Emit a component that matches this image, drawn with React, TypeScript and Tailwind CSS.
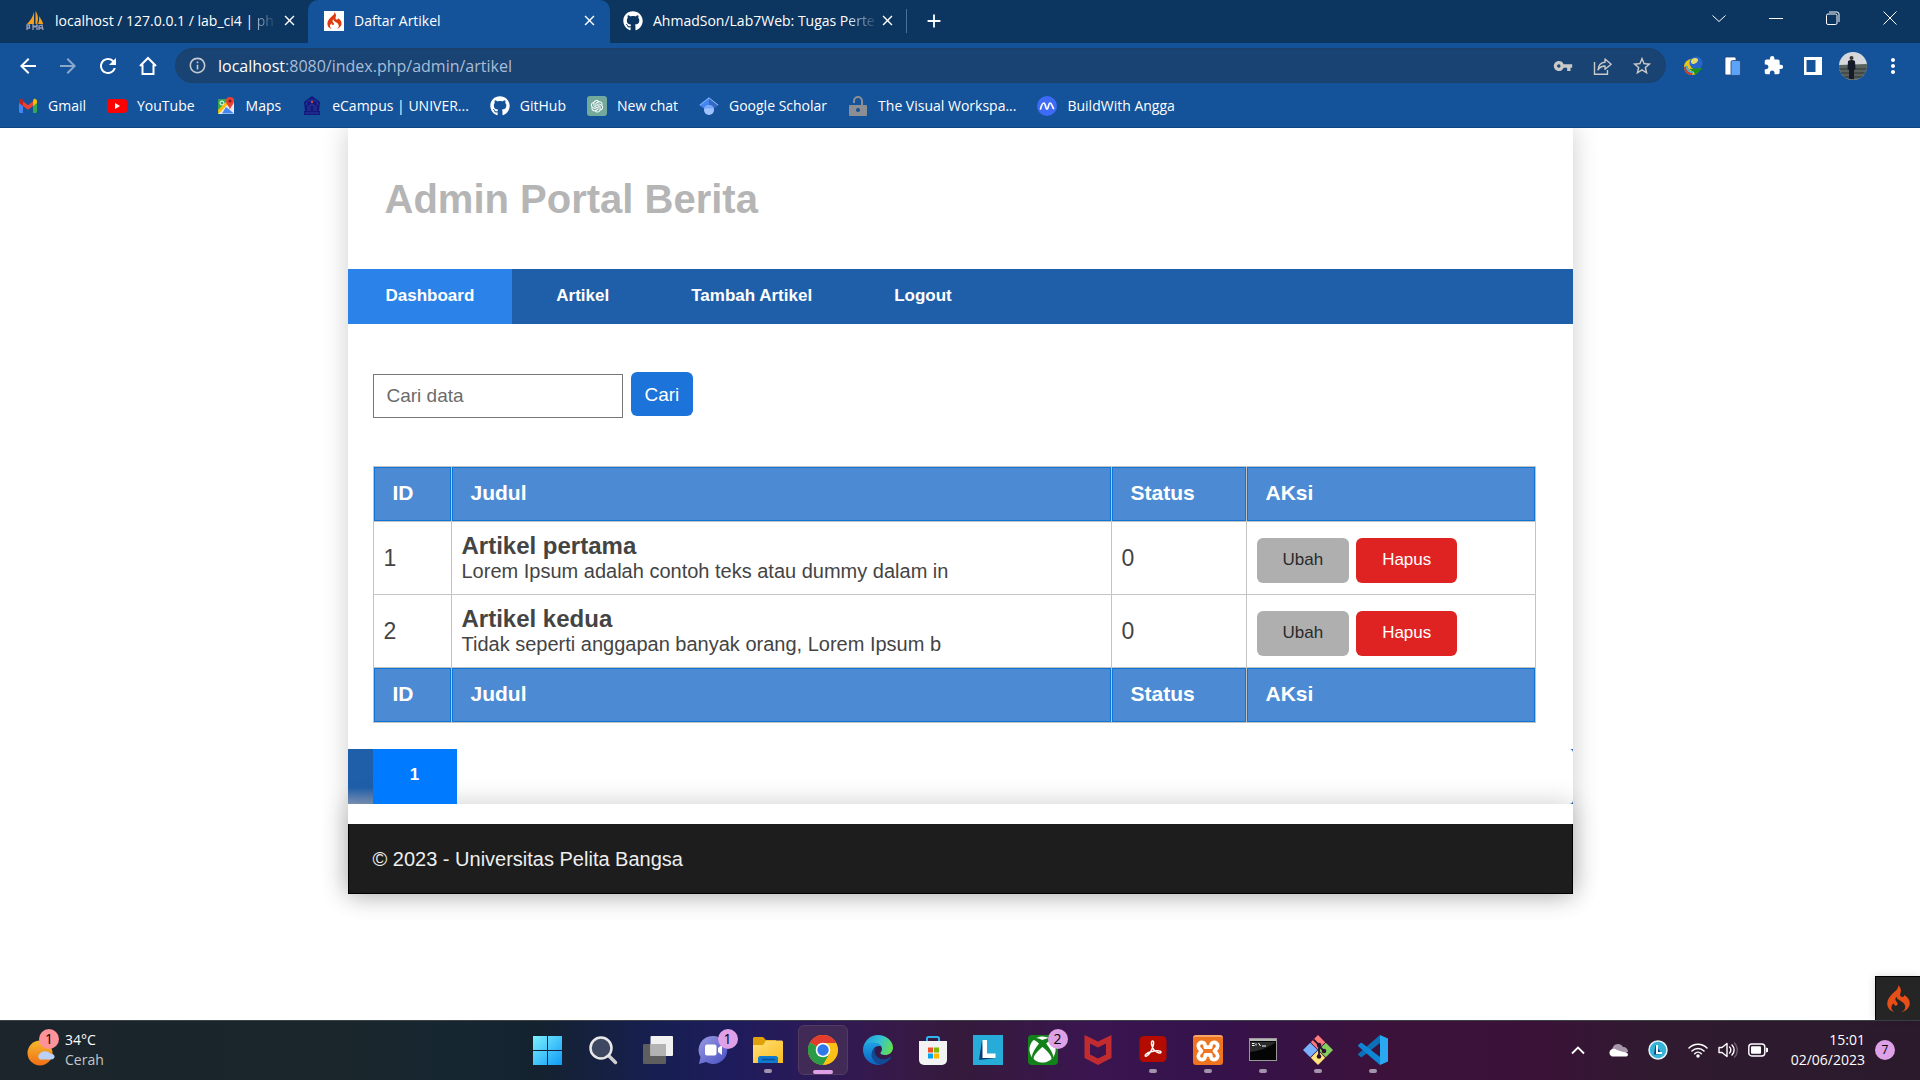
import React from "react";
import { FaGithub, FaXbox } from "react-icons/fa";
import { AiOutlineOpenAI } from "react-icons/ai";
import { SiCodeigniter } from "react-icons/si";
import { MdVpnKey, MdExtension, MdStarBorder, MdInfoOutline, MdMoreVert, MdClose, MdAdd, MdArrowBack, MdArrowForward, MdRefresh } from "react-icons/md";

const PmaIcon = () => (
  <svg viewBox="0 0 20 20" className="size-5 shrink-0">
    <path d="M9 1v12H2C5 10 8 6 9 1zM10.500 0c3 4 3 9 1.500 13h-1.500zM14 5c2 3 4 6 4 8h-5c1-2 1.500-5 1-8z" fill="#f6a01a" />
    <path d="M2 19v-5h2.500v3H2M8 19v-5l2 2 2-2v5M14 19v-4l3-1 1 5M14 17h4" fill="none" stroke="#9aa0b8" strokeWidth="1.300" />
  </svg>
);

const HomeIcon = () => (
  <svg viewBox="0 0 24 24" className="size-6">
    <path d="M4 12L12 4l8 8M6.500 10.500V20h11v-9.500" fill="none" stroke="#fff" strokeWidth="2" />
  </svg>
);

const ShareIcon = () => (
  <svg viewBox="0 0 20 20" className="size-5">
    <path d="M1.500 6v12.300h13V14" fill="none" stroke="#c9c9c9" strokeWidth="1.400" />
    <path d="M5 14c.3-5 3-7.500 7-7.800V3l6.200 5.200-6.200 5V10c-3 0-5.500 1.500-7 4z" fill="none" stroke="#c9c9c9" strokeWidth="1.400" strokeLinejoin="round" />
  </svg>
);

const GmailIcon = () => (
  <svg viewBox="0 0 20 20" className="size-5 shrink-0">
    <path d="M1 5v10.500c0 .8.600 1.500 1.400 1.500H5V8z" fill="#4285f4" />
    <path d="M19 5v10.500c0 .8-.6 1.500-1.400 1.500H15V8z" fill="#34a853" />
    <path d="M15 5.500V10l4-3V5.200c0-2-2.200-3-3.500-2z" fill="#fbbc04" />
    <path d="M5 10V5.300l5 3.900 5-3.900V10l-5 3.800z" fill="#ea4335" />
    <path d="M1 5.200V7l4 3V5.300L4.500 3.200C3.200 2.200 1 3.200 1 5.200z" fill="#c5221f" />
  </svg>
);

const YoutubeIcon = () => (
  <svg viewBox="0 0 20 20" className="size-5 shrink-0">
    <rect y="3" width="20" height="14" rx="3" fill="#f00" />
    <path d="M8 7v6l5-3z" fill="#fff" />
  </svg>
);

const MapsIcon = () => (
  <svg viewBox="0 0 20 20" className="size-5 shrink-0">
    <rect x="2" y="3" width="16" height="15" rx="1" fill="#34a853" />
    <path d="M2 17.500L15 4l3 2v12H3z" fill="#e8eaed" />
    <path d="M10 11l8 6.500H6z" fill="#4285f4" />
    <path d="M2 14l8-8 2 2-9.500 10z" fill="#fbbc04" />
    <circle cx="6" cy="7" r="2" fill="none" stroke="#fff" />
    <path d="M14 14c-.5-4-4-5-4-9a4 4 0 018 0c0 4-3.500 5-4 9z" fill="#ea4335" />
    <circle cx="14" cy="5" r="1.600" fill="#8c1a12" />
  </svg>
);

const CampusIcon = () => (
  <svg viewBox="0 0 20 20" className="size-5 shrink-0">
    <path d="M10 0l8 6-1 9h1v4H2v-4h1L2 6z" fill="#14187c" />
    <path d="M4 9a6 5 0 0112 0M6 9v6M14 9v6M8 15V9h4v6M3 17h14" fill="none" stroke="#2c48a0" strokeWidth=".8" />
    <circle cx="10" cy="6" r="1.200" fill="#c9483f" />
  </svg>
);

const ChatGptIcon = () => (
  <span className="flex size-5 shrink-0 items-center justify-center rounded-[3px] bg-[#74aa9c]">
    <AiOutlineOpenAI className="size-4 text-white" />
  </span>
);

const ScholarIcon = () => (
  <svg viewBox="0 0 20 20" className="size-5 shrink-0">
    <path d="M10 1L0 9l10 7z" fill="#4285f4" />
    <path d="M10 1l10 8-10 7z" fill="#356ac3" />
    <path d="M1 9l9-7 9 7" fill="none" stroke="#8db5f5" />
    <circle cx="10" cy="14" r="5" fill="#a0c3ff" />
    <path d="M5.200 12.500a5 5 0 019.600 0z" fill="#76a7fa" />
  </svg>
);

const LockIcon = () => (
  <svg viewBox="0 0 20 20" className="size-5 shrink-0">
    <path d="M6 7V5a4 4 0 018 0v4" fill="none" stroke="#8b8f93" strokeWidth="2" />
    <rect x="1" y="9" width="18" height="11" rx="1" fill="#8b8f93" />
    <circle cx="10" cy="14" r="2" fill="#165196" />
  </svg>
);

const AnggaIcon = () => (
  <svg viewBox="0 0 20 20" className="size-5 shrink-0">
    <circle cx="10" cy="10" r="10" fill="#3d6bf5" />
    <path d="M3.500 13c1-4 2-6 3.500-6s1.500 6 3 6 1.500-6 3-6 2 3 3.500 5.500" fill="none" stroke="#fff" strokeWidth="1.700" strokeLinecap="round" />
  </svg>
);

const IdmIcon = () => (
  <svg viewBox="0 0 20 20" className="size-5">
    <circle cx="9" cy="11" r="8" fill="#e8c51b" />
    <path d="M1 11a8 8 0 008 8l1-3a5 5 0 01-5-6z" fill="#cf3325" />
    <path d="M4 10a5 5 0 006 6" fill="none" stroke="#46b3dc" strokeWidth="2" />
    <circle cx="13" cy="7" r="6.500" fill="#2a66c8" />
    <path d="M9 3c3-2 6-1 6 1s-3 4-5 4-3-3-1-5z" fill="#e3dc6a" />
    <path d="M6 13l14-1-8 7-1-3z" fill="#17921b" />
  </svg>
);

const DevicesIcon = () => (
  <svg viewBox="0 0 20 20" className="size-5">
    <rect x="2" y="1" width="11" height="18" rx="1.500" fill="#fff" stroke="#24467c" strokeWidth=".8" />
    <rect x="8" y="4.500" width="9.500" height="15" rx="1.500" fill="#5ba3fb" stroke="#24467c" strokeWidth=".8" />
  </svg>
);

const SidePanelIcon = () => (
  <svg viewBox="0 0 18 18" className="size-[18px]">
    <path d="M0 0h18v18H0zM2.500 3v12h9V3z" fill="#fff" fillRule="evenodd" />
  </svg>
);

const Avatar = () => (
  <svg viewBox="0 0 28 28" className="size-7">
    <defs><clipPath id="avatar"><circle cx="14" cy="14" r="14" /></clipPath></defs>
    <g clipPath="url(#avatar)">
      <rect width="28" height="28" fill="#d6d9dc" />
      <path d="M0 13l28-1v16H0z" fill="#59625f" />
      <path d="M0 17h28M0 21h28M0 25h28" stroke="#3e4644" strokeWidth="1.500" />
      <circle cx="12.500" cy="6" r="2" fill="#3b3431" />
      <path d="M9 9c2-1.500 5-1.500 7 0l.5 8-1.500 1v9h-5v-9l-1.500-1z" fill="#171b29" />
    </g>
  </svg>
);

const bookmarks = [
  { label: "Gmail", icon: <GmailIcon /> },
  { label: "YouTube", icon: <YoutubeIcon /> },
  { label: "Maps", icon: <MapsIcon /> },
  { label: "eCampus | UNIVER...", icon: <CampusIcon /> },
  { label: "GitHub", icon: <FaGithub className="size-5 shrink-0" /> },
  { label: "New chat", icon: <ChatGptIcon /> },
  { label: "Google Scholar", icon: <ScholarIcon /> },
  { label: "The Visual Workspa...", icon: <LockIcon /> },
  { label: "BuildWith Angga", icon: <AnggaIcon /> },
];

function WindowButton({ label, d }: { label: string; d: string }) {
  return (
    <button aria-label={label} className="flex h-9 w-[57px] items-center justify-center">
      <svg viewBox="0 0 14 14" className="size-3.5" fill="none" stroke="#fff">
        <path d={d} />
      </svg>
    </button>
  );
}

function TabStrip() {
  return (
    <div className="flex h-[43px] bg-[#0c355f]">
      <div className="flex w-[308px] items-center pr-2.5 pb-0.5 pl-[25px]">
        <PmaIcon />
        <span className="ml-2.5 flex-1 whitespace-nowrap">localhost / 127.0.0.1 / lab_ci4 | <span className="bg-linear-to-r from-[#9fb2c7] to-[#274b71] bg-clip-text text-transparent">ph</span></span>
        <button aria-label="Close tab"><MdClose className="size-[17px]" /></button>
      </div>
      <div className="flex w-[302px] items-center rounded-t-[10px] bg-[#14529a] pr-3 pb-0.5 pl-4">
        <span className="flex size-5 items-center justify-center bg-white">
          <SiCodeigniter className="size-[17px] text-[#dd3b0d]" />
        </span>
        <span className="ml-2.5 flex-1">Daftar Artikel</span>
        <button aria-label="Close tab"><MdClose className="size-[17px]" /></button>
      </div>
      <div className="flex w-[296px] items-center pr-2.5 pb-0.5 pl-[13px]">
        <FaGithub className="size-5 shrink-0" />
        <span className="ml-2.5 flex-1 whitespace-nowrap">AhmadSon/Lab7Web: Tugas P<span className="bg-linear-to-r from-white to-[#274b71] bg-clip-text text-transparent">erte</span></span>
        <button aria-label="Close tab"><MdClose className="size-[17px]" /></button>
      </div>
      <div className="flex items-center pb-0.5">
        <span className="h-6 w-px bg-[#48709b]" />
        <button aria-label="New tab" className="ml-4"><MdAdd className="size-[22px]" /></button>
      </div>
      <div className="ml-auto flex pr-0.5">
        <WindowButton label="Search tabs" d="M.5 4.500l6.500 6 6.500-6" />
        <WindowButton label="Minimize" d="M0 7.500h14" />
        <WindowButton label="Restore" d="M2 3h7.500a1.500 1.500 0 011.500 1.500V12a1.500 1.500 0 01-1.500 1.500H2A1.500 1.500 0 01.5 12V4.500A1.500 1.500 0 012 3zM3 1h8a2 2 0 012 2v8" />
        <WindowButton label="Close" d="M.5.5l13 13M13.500.5l-13 13" />
      </div>
    </div>
  );
}

function Browser() {
  return (
    <header className="relative z-20 bg-[#14529a] font-['Open_Sans',sans-serif] text-sm text-white">
      <TabStrip />
      <div className="flex h-[45px] items-center pr-[7px] pl-2">
        <button aria-label="Back" className="flex w-10 justify-center"><MdArrowBack className="size-6" /></button>
        <button aria-label="Forward" className="flex w-10 justify-center"><MdArrowForward className="size-6 text-[#8ba8ca]" /></button>
        <button aria-label="Reload" className="flex w-10 justify-center"><MdRefresh className="size-6" /></button>
        <button aria-label="Home" className="flex w-10 justify-center"><HomeIcon /></button>
        <div className="ml-[7px] flex h-[35px] flex-1 items-center rounded-full border border-[#1d406a] bg-[#194373] px-3 text-base">
          <MdInfoOutline className="size-[19px] text-[#c3cad2]" />
          <span className="ml-[11px] flex-1 text-[#a9bdd6]"><span className="text-white">localhost</span>:8080/index.php/admin/artikel</span>
          <button aria-label="Passwords" className="mr-5 text-[#c9c9c9]"><MdVpnKey className="size-5" /></button>
          <button aria-label="Share" className="mr-[18px]"><ShareIcon /></button>
          <button aria-label="Bookmark" className="text-[#c9c9c9]"><MdStarBorder className="size-[22px]" /></button>
        </div>
        <div className="ml-[7px] flex">
          {[
            ["Download manager", <IdmIcon />],
            ["Devices", <DevicesIcon />],
            ["Extensions", <MdExtension className="size-[21px]" />],
            ["Side panel", <SidePanelIcon />],
            ["Profile", <Avatar />],
            ["Menu", <MdMoreVert className="size-6" />],
          ].map(([label, icon]) => (
            <button key={label as string} aria-label={label as string} className="flex w-10 items-center justify-center">{icon}</button>
          ))}
        </div>
      </div>
      <nav className="flex h-10 items-center gap-[21px] border-b border-[#0f4684] pb-1 pl-[18px]">
        {bookmarks.map((b) => (
          <a key={b.label} href="#" className="flex items-center gap-2.5 whitespace-nowrap">
            {b.icon}
            {b.label}
          </a>
        ))}
      </nav>
    </header>
  );
}

const columns = ["ID", "Judul", "Status", "AKsi"];
const articles = [
  { id: 1, title: "Artikel pertama", text: "Lorem Ipsum adalah contoh teks atau dummy dalam in", status: 0 },
  { id: 2, title: "Artikel kedua", text: "Tidak seperti anggapan banyak orang, Lorem Ipsum b", status: 0 },
];

function HeadingRow() {
  return (
    <tr className="h-[55px]">
      {columns.map((c) => (
        <th key={c} scope="col" className="border border-[#c4c4c4] bg-[#4c8bd4] bg-clip-padding px-[19px] pb-0.5 text-left text-[21px] font-bold text-white shadow-[inset_0_0_0_1px_#0f74d4]">{c}</th>
      ))}
    </tr>
  );
}

function Portal() {
  return (
    <div className="mx-auto max-w-[1225px] bg-white shadow-[0_0_25px_rgba(0,0,0,0.2)]">
      <div className="flex h-[141px] items-center px-[37px]">
        <h1 className="text-[40px] leading-12 font-bold text-[#b5b5b5]">Admin Portal Berita</h1>
      </div>
      <nav className="flex h-[55px] gap-1.5 bg-[#1f5faa] text-[17px] font-bold text-white">
        {["Dashboard", "Artikel", "Tambah Artikel", "Logout"].map((item, i) => (
          <a key={item} href="#" className={i === 0 ? "flex items-center bg-[#2b83ea] px-[38px] pb-0.5" : "flex items-center px-[38px] pb-0.5"}>{item}</a>
        ))}
      </nav>
      <main className="pt-12 pr-[37px] pb-[26px] pl-[25px]">
        <form className="flex items-start gap-2" onSubmit={(e) => e.preventDefault()}>
          <input type="text" aria-label="Cari data" placeholder="Cari data" className="mt-0.5 h-11 w-[250px] border border-[#767676] px-[13px] text-[19px] placeholder:text-[#6b6b6b]" />
          <button className="h-11 rounded-md bg-[#1c73d9] px-3.5 pt-0.5 text-[19px] text-white">Cari</button>
        </form>
        <table className="mt-12 w-full table-fixed border-collapse text-[#444]">
          <colgroup>
            <col className="w-[78px]" />
            <col />
            <col className="w-[135px]" />
            <col className="w-[289px]" />
          </colgroup>
          <thead><HeadingRow /></thead>
          <tbody>
            {articles.map((a) => (
              <tr key={a.id} className="h-[73px]">
                <td className="border border-[#c4c4c4] px-2.5 text-[23px]">{a.id}</td>
                <td className="border border-[#c4c4c4] px-2.5">
                  <h3 className="text-2xl leading-[26px] font-bold">{a.title}</h3>
                  <p className="text-xl leading-6">{a.text}</p>
                </td>
                <td className="border border-[#c4c4c4] px-2.5 text-[23px]">{a.status}</td>
                <td className="border border-[#c4c4c4] px-2.5 pt-1">
                  <div className="flex gap-[7px] text-[17px]">
                    <a href="#" className="flex h-[45px] items-center rounded-md bg-[#afafaf] px-[26px] text-[#2a2a2a]">Ubah</a>
                    <a href="#" className="flex h-[45px] items-center rounded-md bg-[#df2323] px-[26px] text-white">Hapus</a>
                  </div>
                </td>
              </tr>
            ))}
          </tbody>
          <tfoot><HeadingRow /></tfoot>
        </table>
      </main>
      <nav aria-label="Pagination" className="flex h-[55px] bg-[#1f5faa]">
        <div className="w-[25px] bg-[linear-gradient(to_bottom,#1f5faa_70%,#8097bc)]" />
        <a href="#" className="relative z-10 flex w-[84px] items-center justify-center bg-[#007bff] pb-1 text-[17px] font-bold text-white">1</a>
        <div className="flex-1 rounded-r bg-white" />
      </nav>
      <footer className="relative bg-white pt-5 shadow-[0_0_25px_rgba(0,0,0,0.2)]">
        <p className="flex h-[70px] items-center border border-t-0 border-black bg-[#1d1d1d] px-6 text-xl text-[#eee]">© 2023 - Universitas Pelita Bangsa</p>
      </footer>
    </div>
  );
}

const big = "size-[30px]";

const StartIcon = () => (
  <svg viewBox="0 0 30 30" className={big}>
    <defs><linearGradient id="win" x1="0" y1="0" x2="1" y2="1"><stop stopColor="#7df0fd" /><stop offset="1" stopColor="#0f9bf7" /></linearGradient></defs>
    <path d="M0 1h14v14H0zM15 1h14v14H15zM0 16h14v14H0zM15 16h14v14H15z" fill="url(#win)" />
  </svg>
);
const SearchIcon = () => (
  <svg viewBox="0 0 30 30" className={big}>
    <path d="M20 20l7.500 7.500" stroke="#cfcfcf" strokeWidth="3.500" strokeLinecap="round" />
    <circle cx="13" cy="13" r="10.500" fill="#3f4861" stroke="#e8e8e8" strokeWidth="2.500" />
  </svg>
);
const TaskViewIcon = () => (
  <svg viewBox="0 0 30 30" className={big}>
    <rect x="0" y="9" width="23" height="20" rx="1" fill="#5e5e5e" />
    <rect x="7.500" y="1" width="22.500" height="20" rx="1" fill="#f1f1f1" />
    <path d="M7.500 9H23v12H7.500z" fill="#b3b3b3" />
  </svg>
);
const ChatIcon = () => (
  <svg viewBox="0 0 30 30" className={big}>
    <defs><linearGradient id="chat" x1="0" y1="0" x2="1" y2="1"><stop stopColor="#9a9ae0" /><stop offset="1" stopColor="#4750c4" /></linearGradient></defs>
    <path d="M15 1a14 14 0 11-7 26l-7 2 1.500-7A14 14 0 0115 1z" fill="url(#chat)" />
    <rect x="7" y="9.500" width="11.500" height="11" rx="2" fill="#fff" />
    <path d="M20 13l4-3v10l-4-3z" fill="#fff" />
  </svg>
);
const ExplorerIcon = () => (
  <svg viewBox="0 0 30 30" className={big}>
    <defs><linearGradient id="folder" x1="0" y1="0" x2="1" y2="1"><stop stopColor="#ffe078" /><stop offset="1" stopColor="#fbbc1f" /></linearGradient></defs>
    <path d="M0 3.500C0 2.700.7 2 1.500 2H10l3 3h10v7H0z" fill="#dfa009" />
    <path d="M0 10h10l3-4.500h15.500c.8 0 1.500.7 1.500 1.500v21H0z" fill="url(#folder)" />
    <path d="M5 28v-4.500A2.500 2.500 0 017.500 21h15a2.500 2.500 0 012.500 2.500V28z" fill="#0f7bd0" />
    <path d="M9 24.500h13" stroke="#0a4f98" strokeWidth="1.500" />
  </svg>
);
const ChromeIcon = () => (
  <svg viewBox="0 0 30 30" className={big}>
    <circle cx="15" cy="15" r="15" fill="#fbc016" />
    <path d="M15 15L2 7.500A15 15 0 0128 7.500z" fill="#e33b2e" />
    <path d="M2 7.500A15 15 0 0015 30l6.500-11.200L15 15z" fill="#2a9b47" />
    <path d="M15 8h13a15 15 0 01-13 22l6.500-11z" fill="#fbc016" />
    <circle cx="15" cy="15" r="7.300" fill="#fff" />
    <circle cx="15" cy="15" r="5.700" fill="#2f78ec" />
  </svg>
);
const EdgeIcon = () => (
  <svg viewBox="0 0 30 30" className={big}>
    <defs>
      <linearGradient id="edgeTop" x1="0" y1=".3" x2="1" y2=".6"><stop stopColor="#1f9de0" /><stop offset=".5" stopColor="#35c1d6" /><stop offset="1" stopColor="#63e04e" /></linearGradient>
      <linearGradient id="edgeLeft" x1="0" y1="0" x2="0" y2="1"><stop stopColor="#1ea2e4" /><stop offset="1" stopColor="#0b62c0" /></linearGradient>
    </defs>
    <path d="M0 14C1 6 7 0 15 0s15 6 15 12.500c0 5-4 7.500-8 7.500-3 0-4.500-1-4.500-2s1.500-1.500 1.500-4c0-3-3-6-8-6-6 0-10 3-11 6z" fill="url(#edgeTop)" />
    <path d="M0 14c1-4 5-6.500 10-6.500 4 0 7 1.500 8.500 4-5-1.500-9 1.500-9 6.500 0 6 4 10 9 11.500A15 15 0 010 15z" fill="url(#edgeLeft)" />
    <path d="M13 13c-2 2-2 6 1.500 9 4 3.300 9 3 12.500 0 1-.6 1.500 0 1 .8A15 15 0 0118.500 29.500C13 30 8.500 24.500 8.500 19.500c0-3.500 2-5.500 4.500-6.500z" fill="#124a94" />
  </svg>
);
const StoreIcon = () => (
  <svg viewBox="0 0 30 30" className={big}>
    <path d="M9 8V3.500C9 2.500 9.500 2 10.500 2h9c1 0 1.500.5 1.500 1.500V8" fill="none" stroke="#2fb4ee" strokeWidth="2" />
    <path d="M1 6h28v19a5 5 0 01-5 5H6a5 5 0 01-5-5z" fill="#f3f3f3" />
    <path d="M10 12.500h5v5h-5z" fill="#f0502a" /><path d="M16 12.500h5v5h-5z" fill="#7fba00" />
    <path d="M10 18.500h5v5h-5z" fill="#00a4ef" /><path d="M16 18.500h5v5h-5z" fill="#ffb900" />
  </svg>
);
const LIcon = () => (
  <svg viewBox="0 0 30 30" className={big}>
    <path d="M0 0h30v30H0z" fill="#27acd9" />
    <path d="M9 5L6 25l17-2-12-3z" fill="#0d3a78" />
    <path d="M9.500 5H14v13.500h8.500V23h-13z" fill="#fff" />
  </svg>
);
const XboxIcon = () => (
  <span className="flex size-[30px] items-center justify-center rounded-sm bg-[#13811a]"><FaXbox className="size-[27px] text-white" /></span>
);
const McafeeIcon = () => (
  <svg viewBox="0 0 30 30" className={big}>
    <path d="M1.500 0L15 6.500 28.500 0v23L15 30 1.500 23zM7 8.500v11l8 4 8-4v-11l-8 4z" fill="#c22b2f" fillRule="evenodd" />
  </svg>
);
const AcrobatIcon = () => (
  <svg viewBox="0 0 30 30" className={big}>
    <rect x="1.500" y="1" width="27" height="26" rx="4.500" fill="#b30b00" />
    <path d="M14.500 6c2 0 1 4.500-.5 8-1.500 3.500-4.500 7.500-6.200 7.200-1.800-.5.500-3.200 5.200-4.400 4.700-1.300 9.500-1.300 10 .2.300 1.600-3.300 1.400-6.200-1.200C13.500 13 12.500 6 14.500 6z" fill="none" stroke="#fff" strokeWidth="1.500" />
  </svg>
);
const XamppIcon = () => (
  <span className="flex size-[30px] items-center justify-center rounded-[3px] border-t-2 border-[#f9a566] bg-[#ee7420]">
    <svg viewBox="0 0 24 24" className="size-[26px]" fill="none" stroke="#fff" strokeWidth="3.400" strokeLinecap="round" strokeLinejoin="round">
      <path d="M9.500 8.500C9.500 5.500 8.500 4 6.500 4S3 5.300 3 7.300 4.500 10.500 6 12c-1.500 1.500-3 2.700-3 4.700S4.500 20 6.500 20s3-1.500 3-4.500h5c0 3 1 4.500 3 4.500s3.500-1.300 3.500-3.300-1.500-3.200-3-4.700c1.500-1.500 3-2.700 3-4.700S19.500 4 17.500 4s-3 1.500-3 4.500z" />
    </svg>
  </span>
);
const TerminalIcon = () => (
  <svg viewBox="0 0 30 30" className={big}>
    <rect x="1.500" y="3.500" width="27" height="22" fill="#050505" stroke="#9a9a9a" />
    <path d="M2 4h26v2H2z" fill="#b9b9b9" />
    <path d="M2 17C12 16 22 12 28 7H2z" fill="#2b2b2b" />
    <path d="M4 10.500h2.500M4 8.500h2.500M8 8.500v2M10.500 8l2 3M14 11h4" stroke="#fff" />
  </svg>
);
const GitIcon = () => (
  <svg viewBox="0 0 30 30" className={big}>
    <path d="M15 0l7.200 7.200L15 14.500 7.800 7.200z" fill="#ff7b7b" />
    <path d="M22.800 7.800L30 15l-7.200 7.200L15.500 15z" fill="#82cf5f" />
    <path d="M15 15.500l7.200 7.300L15 30l-7.200-7.200z" fill="#ffe37b" />
    <path d="M7.200 7.800l7.300 7.200-7.300 7.200L0 15z" fill="#7bb0ff" />
    <path d="M10.500 4.500L16 10v12M16 11l5 5" fill="none" stroke="#2b1230" strokeWidth="1.800" />
    <g fill="#2b1230"><circle cx="16" cy="10" r="2.300" /><circle cx="21" cy="16" r="2.300" /><circle cx="16" cy="21.500" r="2.300" /></g>
  </svg>
);
const VscodeIcon = () => (
  <svg viewBox="0 0 30 30" className={big}>
    <path d="M22 0l8 3.500v23L22 30z" fill="#29a9f2" />
    <path d="M22 0v8L4 22l-1 .3-2.500-2c-.6-.6-.6-1.200 0-1.800z" fill="#0b70b8" />
    <path d="M22 30v-8L4 8l-1-.3-2.500 2c-.6.600-.6 1.200 0 1.800z" fill="#0f86d3" />
  </svg>
);

type TaskbarApp = { name: string; icon: React.ReactNode; badge?: number; open?: boolean; active?: boolean };
const apps: TaskbarApp[] = [
  { name: "Start", icon: <StartIcon /> },
  { name: "Search", icon: <SearchIcon /> },
  { name: "Task view", icon: <TaskViewIcon /> },
  { name: "Chat", icon: <ChatIcon />, badge: 1 },
  { name: "File Explorer", icon: <ExplorerIcon />, open: true },
  { name: "Chrome", icon: <ChromeIcon />, active: true },
  { name: "Edge", icon: <EdgeIcon /> },
  { name: "Store", icon: <StoreIcon /> },
  { name: "Lenovo", icon: <LIcon /> },
  { name: "Xbox", icon: <XboxIcon />, badge: 2 },
  { name: "McAfee", icon: <McafeeIcon /> },
  { name: "Acrobat", icon: <AcrobatIcon />, open: true },
  { name: "XAMPP", icon: <XamppIcon />, open: true },
  { name: "Terminal", icon: <TerminalIcon />, open: true },
  { name: "Git", icon: <GitIcon />, open: true },
  { name: "VS Code", icon: <VscodeIcon />, open: true },
];

function Tray() {
  return (
    <div className="flex items-center justify-end pr-[25px] text-white">
      <svg viewBox="0 0 14 10" className="w-3.5"><path d="M1 8.500l6-6 6 6" fill="none" stroke="#fff" strokeWidth="1.800" /></svg>
      <svg viewBox="0 0 20 14" className="ml-[23px] w-5">
        <path d="M5 9a5.500 5.500 0 0110-5c3 0 5 2 5 5z" fill="#a796aa" />
        <path d="M4 13.500a4 4 0 010-7.500c2-.5 3.500 0 5 1l6 2c3-.5 5 1 5 2.500s-1 2-2.500 2z" fill="#fff" />
      </svg>
      <svg viewBox="0 0 20 20" className="ml-5 w-5">
        <circle cx="10" cy="10" r="9" fill="#35b4d8" stroke="#e8f4f8" strokeWidth="1.500" />
        <path d="M7.500 5L6 14.500l8-.5z" fill="#0d3a78" /><path d="M8 5h2v7h4v2H8z" fill="#fff" />
      </svg>
      <svg viewBox="0 0 20 16" className="ml-5 w-5" fill="none" stroke="#fff" strokeWidth="1.500" strokeLinecap="round">
        <path d="M1 6a12.500 12.500 0 0118 0M4 9a8.500 8.500 0 0112 0M6.700 11.700a4.700 4.700 0 016.600 0" /><circle cx="10" cy="14" r="1" fill="#fff" />
      </svg>
      <svg viewBox="0 0 20 18" className="ml-2.5 w-5" fill="none" stroke="#fff" strokeWidth="1.400" strokeLinejoin="round" strokeLinecap="round">
        <path d="M1 6.500h3L9 2.500v13l-5-4H1zM11.500 6a4 4 0 010 6M14 4a7 7 0 010 10" /><path d="M16.500 2a10 10 0 010 14" stroke="#6d5a6f" />
      </svg>
      <svg viewBox="0 0 20 14" className="ml-2.5 w-5">
        <rect x=".8" y="1" width="16" height="12" rx="3" fill="none" stroke="#fff" strokeWidth="1.400" />
        <rect x="3" y="3.200" width="10" height="7.600" rx="1" fill="#fff" /><path d="M18 4.500l2 .8v3.400l-2 .8z" fill="#fff" />
      </svg>
      <div className="ml-[23px] text-right leading-5"><div>15:01</div><div>02/06/2023</div></div>
      <span className="ml-2.5 flex size-5 items-center justify-center rounded-full bg-[#dea0e6] text-xs text-black">7</span>
    </div>
  );
}

function Taskbar() {
  return (
    <footer className="grid h-[60px] grid-cols-[1fr_auto_1fr] items-center border-t border-[#3c4448] bg-[linear-gradient(90deg,#1b252b_0%,#1a262c_18%,#152632_25%,#14222f_28%,#161f50_34%,#1e1c5c_38%,#2b1a58_42%,#36194a_46%,#351a3b_50%,#3a1550_57%,#35124a_64%,#3c123b_72%,#3a1238_80%,#301a30_86%,#2a1a2c_100%)] pb-0.5 font-['Open_Sans',sans-serif] text-sm text-white">
      <div className="flex items-center pl-[27px]">
        <div className="relative -mt-0.5">
          <svg viewBox="0 0 30 36" className="w-[30px]">
            <defs><linearGradient id="sun" x1="0" y1="0" x2="0" y2="1"><stop stopColor="#f4b82e" /><stop offset="1" stopColor="#f06f16" /></linearGradient></defs>
            <circle cx="13" cy="22" r="12.500" fill="url(#sun)" />
            <path d="M13 28.500a3.500 3.500 0 010-6c2-3 8-3 10 0 6 0 6 6 1 6z" fill="#b9d0f7" />
          </svg>
          <span className="absolute -top-0.5 -right-0.5 flex size-5 items-center justify-center rounded-full bg-[#fd9298] text-black">1</span>
        </div>
        <div className="ml-2 leading-5"><div>34°C</div><div className="text-[#c3c7c9]">Cerah</div></div>
      </div>
      <div className="flex">
        {apps.map((app) => (
          <div key={app.name} className="flex w-[55px] justify-center">
            <button aria-label={app.name} className={app.active ? "relative flex size-[50px] items-center justify-center rounded-md border border-[#513b63] bg-[#412a56]" : "relative flex size-[50px] items-center justify-center"}>
              {app.icon}
              {app.badge && <span className="absolute top-1 right-0 flex size-5 items-center justify-center rounded-full bg-[#dea0e6] text-black">{app.badge}</span>}
              {app.open && <span className="absolute bottom-0.5 h-1 w-2 rounded-full bg-[#a394ae]" />}
              {app.active && <span className="absolute bottom-0 h-1 w-5 rounded-full bg-[#dea0e6]" />}
            </button>
          </div>
        ))}
      </div>
      <Tray />
    </footer>
  );
}

export default function App() {
  return (
    <div className="flex min-h-screen flex-col bg-white font-['Liberation_Sans',Arial,sans-serif]">
      <Browser />
      <div className="relative flex-1">
        <Portal />
        <button aria-label="Debug toolbar" className="absolute right-0 bottom-0 flex h-11 w-[45px] items-center justify-center border-t border-l border-black bg-[#252525] shadow-[0_0_8px_rgba(0,0,0,0.15)]">
          <SiCodeigniter className="size-[27px] text-[#e84e17]" />
        </button>
      </div>
      <Taskbar />
    </div>
  );
}
